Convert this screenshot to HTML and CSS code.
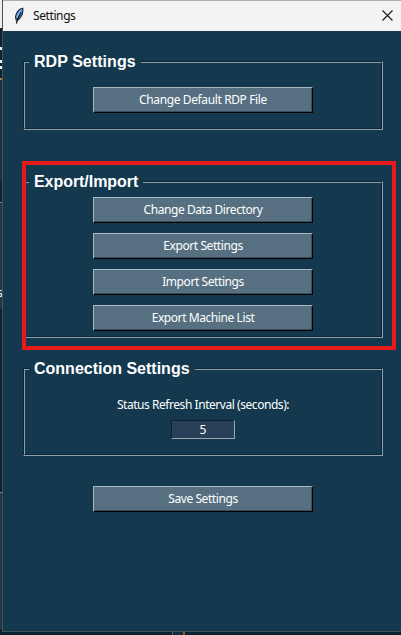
FILE: index.html
```html
<!DOCTYPE html>
<html lang="en">
<head>
<meta charset="utf-8">
<title>Settings</title>
<link rel="stylesheet" href="styles.css">
</head>
<body>
<div class="behind" aria-hidden="true">
  <i class="bit head"></i><i class="bit w1"></i><i class="bit w2"></i><i class="bit w3"></i><i class="bit gold"></i>
  <i class="bit panel"></i><i class="bit gap"></i><i class="bit field"></i><span class="bit letter">s</span><i class="bit low"></i>
  <i class="bit tab"></i>
</div>
<main class="window">
  <header class="titlebar">
    <svg class="feather" width="12" height="18" viewBox="0 0 12 18">
      <path d="M9.8 1.2C6.5 1.5 3.2 5 2.5 9.5L3.2 13.2 5 13C8 10.5 10.5 6 9.8 1.2Z" fill="#5592d6" stroke="#17243a" stroke-width="1.1"/>
      <path d="M8.5 2.5C6 4.8 4.6 8 4.1 11" fill="none" stroke="#a5cdf2" stroke-width="1"/>
      <path d="M8 5.5L4.4 12.5 3.4 16.5" fill="none" stroke="#111" stroke-width="1.2"/>
    </svg>
    <span class="name">Settings</span>
    <svg class="close" width="11" height="11" viewBox="0 0 11 11"><path d="M.5.5l10 10M10.5.5l-10 10" stroke="#1b1b1b" stroke-width="1.15"/></svg>
  </header>
  <section class="group rdp">
    <h2>RDP Settings</h2>
    <button class="btn b1"><span>Change Default RDP File</span></button>
  </section>
  <section class="group export">
    <h2>Export/Import</h2>
    <button class="btn b2"><span>Change Data Directory</span></button>
    <button class="btn b3"><span>Export Settings</span></button>
    <button class="btn b4"><span>Import Settings</span></button>
    <button class="btn b5"><span>Export Machine List</span></button>
    <div class="highlight"></div>
  </section>
  <section class="group connection">
    <h2>Connection Settings</h2>
    <label class="caption" for="interval">Status Refresh Interval (seconds):</label>
    <input id="interval" class="entry" value="5">
  </section>
  <button class="btn save"><span>Save Settings</span></button>
</main>
</body>
</html>
```
FILE: styles.css
```css
* { box-sizing: border-box; }
body {
  margin: 0;
  width: 401px;
  height: 635px;
  overflow: hidden;
  position: relative;
  background: #0b2231;
  color: #fff;
  font: 12px/16px "Noto Sans", "Open Sans", sans-serif;
}

/* slivers of the window underneath */
.bit { position: absolute; left: 0; width: 2px; }
.head { top: 0; height: 28px; background: #eee; }
.w1 { top: 47px; height: 3px; background: #eee; }
.w2 { top: 60px; height: 3px; background: #eee; }
.w3 { top: 66px; height: 3px; background: #eee; }
.gold { top: 78px; height: 2px; background: #a88045; }
.panel { top: 80px; height: 101px; background: #1f3042; }
.gap { top: 202px; height: 1px; background: #7d8a92; }
.field { top: 203px; height: 106px; background: #263647; }
.letter { top: 285px; left: -3px; width: 6px; }
.low { top: 492px; height: 137px; background: #263647; border-top: 1px solid #7d8a92; }
.tab { top: 631px; left: 172px; width: 13px; height: 4px; background: #1c2a38; border-left: 1px solid #53616b; border-right: 2px solid #7c6039; }

.window {
  position: relative;
  display: flex;
  flex-direction: column;
  margin-left: 2px;
  width: 399px;
  height: 632px;
  background: #14394f;
  border: solid #435159;
  border-width: 0 0 1px 1px;
}
.titlebar {
  display: flex;
  align-items: center;
  height: 31px;
  flex: none;
  padding: 0 2px 0 10px;
  background: #f3f3f3;
  border-top: 1px solid #adadad;
  color: #111;
}
.feather { margin-top: -1px; }
.name { margin-left: 8px; letter-spacing: -.4px; }
.close { margin-left: auto; margin-right: 6px; margin-top: -1px; }

.group {
  position: relative;
  display: flex;
  flex-direction: column;
  align-items: center;
  flex: none;
  width: 360px;
  margin-left: 20px;
  border: 1px solid;
  border-color: #0d2635 #8f9fa9 #8f9fa9 #0d2635;
}
.group::before {
  content: "";
  position: absolute;
  inset: 0;
  border: 1px solid;
  border-color: #8f9fa9 #0d2635 #0d2635 #8f9fa9;
}
.rdp { margin-top: 30px; height: 69px; padding-top: 25px; }
.export { margin-top: 51px; height: 157px; padding-top: 15px; gap: 10px; }
.connection { margin-top: 30px; height: 88px; padding-top: 28px; }

h2 {
  position: absolute;
  left: 5px;
  top: -10px;
  margin: 0;
  padding: 0 5px;
  background: #14394f;
  font: bold 16px/20px "Liberation Sans", Arial, sans-serif;
  white-space: nowrap;
}
.rdp h2 { letter-spacing: .05px; }
.export h2 { letter-spacing: -.05px; }
.btn {
  position: relative;
  flex: none;
  width: 220px;
  height: 26px;
  padding: 0;
  color: #fff;
  font: inherit;
  background: #567081;
  border: 1px solid;
  border-color: #a8b7c0 #000 #000 #a8b7c0;
  box-shadow: inset -1px -1px #394c58;
}
.btn { letter-spacing: -.42px; }
.b1 { letter-spacing: -.38px; }
.caption { position: relative; letter-spacing: -.45px; }
.save { margin: 30px 0 0 90px; }
.entry {
  position: relative;
  width: 64px;
  height: 19px;
  margin-top: 7px;
  padding: 0;
  background: #294158;
  border: 1px solid;
  border-color: #14222e #9aa5ad #9aa5ad #14222e;
  border-radius: 0;
  color: #fff;
  font: inherit;
  text-align: center;
}
.highlight {
  position: absolute;
  left: -2px;
  top: -21px;
  width: 374px;
  height: 189px;
  border: 4px solid #e8191b;
}
```
